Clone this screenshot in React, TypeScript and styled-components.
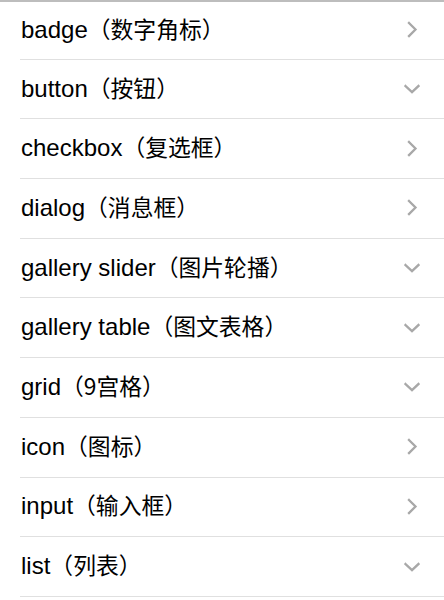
import React from "react";
import styled, { createGlobalStyle } from "styled-components";

const Global = createGlobalStyle`
  html, body { margin: 0; padding: 0; background: #fff; }
  body { font-family: "Liberation Sans", "Noto Sans CJK SC", sans-serif; }
`;

const Page = styled.div`
  border-top: 2px solid #bdbdbd;
  background: #fff;
`;

const List = styled.ul`
  list-style: none;
  margin: 0;
  padding: 0 0 0 20px;
`;

const Row = styled.li`
  height: 58.7px;
  border-bottom: 1px solid #e0e0e0;
  display: flex;
  align-items: center;
  justify-content: space-between;
  padding-right: 24px;
  box-sizing: content-box;

  &:first-child {
    height: 56.7px;
  }
`;

const Label = styled.span`
  display: flex;
  align-items: baseline;
  color: #000;
  padding: 0 0 4px 1px;
`;

const Latin = styled.span`
  font-family: "Liberation Sans", Arial, sans-serif;
  font-size: 24px;
`;

const Cjk = styled.span`
  font-family: "Noto Sans CJK SC", sans-serif;
  font-size: 22.8px;
`;

const Chevron = styled.svg`
  display: block;
  flex: none;
`;

type Dir = "right" | "down";

const Arrow: React.FC<{ dir: Dir }> = ({ dir }) =>
  dir === "right" ? (
    <Chevron width="16" height="18" viewBox="0 0 16 18">
      <path d="M5 2 L11.5 8.5 L5 15" fill="none" stroke="#a8a8a8" strokeWidth="2.3" strokeLinecap="square" />
    </Chevron>
  ) : (
    <Chevron width="16" height="18" viewBox="0 0 16 18">
      <path d="M1.5 6 L8 12.2 L14.5 6" fill="none" stroke="#a8a8a8" strokeWidth="2.3" strokeLinecap="square" />
    </Chevron>
  );

const items: { en: string; zh: string; dir: Dir }[] = [
  { en: "badge", zh: "（数字角标）", dir: "right" },
  { en: "button", zh: "（按钮）", dir: "down" },
  { en: "checkbox", zh: "（复选框）", dir: "right" },
  { en: "dialog", zh: "（消息框）", dir: "right" },
  { en: "gallery slider", zh: "（图片轮播）", dir: "down" },
  { en: "gallery table", zh: "（图文表格）", dir: "down" },
  { en: "grid", zh: "（9宫格）", dir: "down" },
  { en: "icon", zh: "（图标）", dir: "right" },
  { en: "input", zh: "（输入框）", dir: "right" },
  { en: "list", zh: "（列表）", dir: "down" },
];

export default function App() {
  return (
    <>
      <Global />
      <Page>
        <List>
          {items.map((it) => (
            <Row key={it.en}>
              <Label>
                <Latin>{it.en}</Latin>
                <Cjk>{it.zh}</Cjk>
              </Label>
              <Arrow dir={it.dir} />
            </Row>
          ))}
        </List>
      </Page>
    </>
  );
}
